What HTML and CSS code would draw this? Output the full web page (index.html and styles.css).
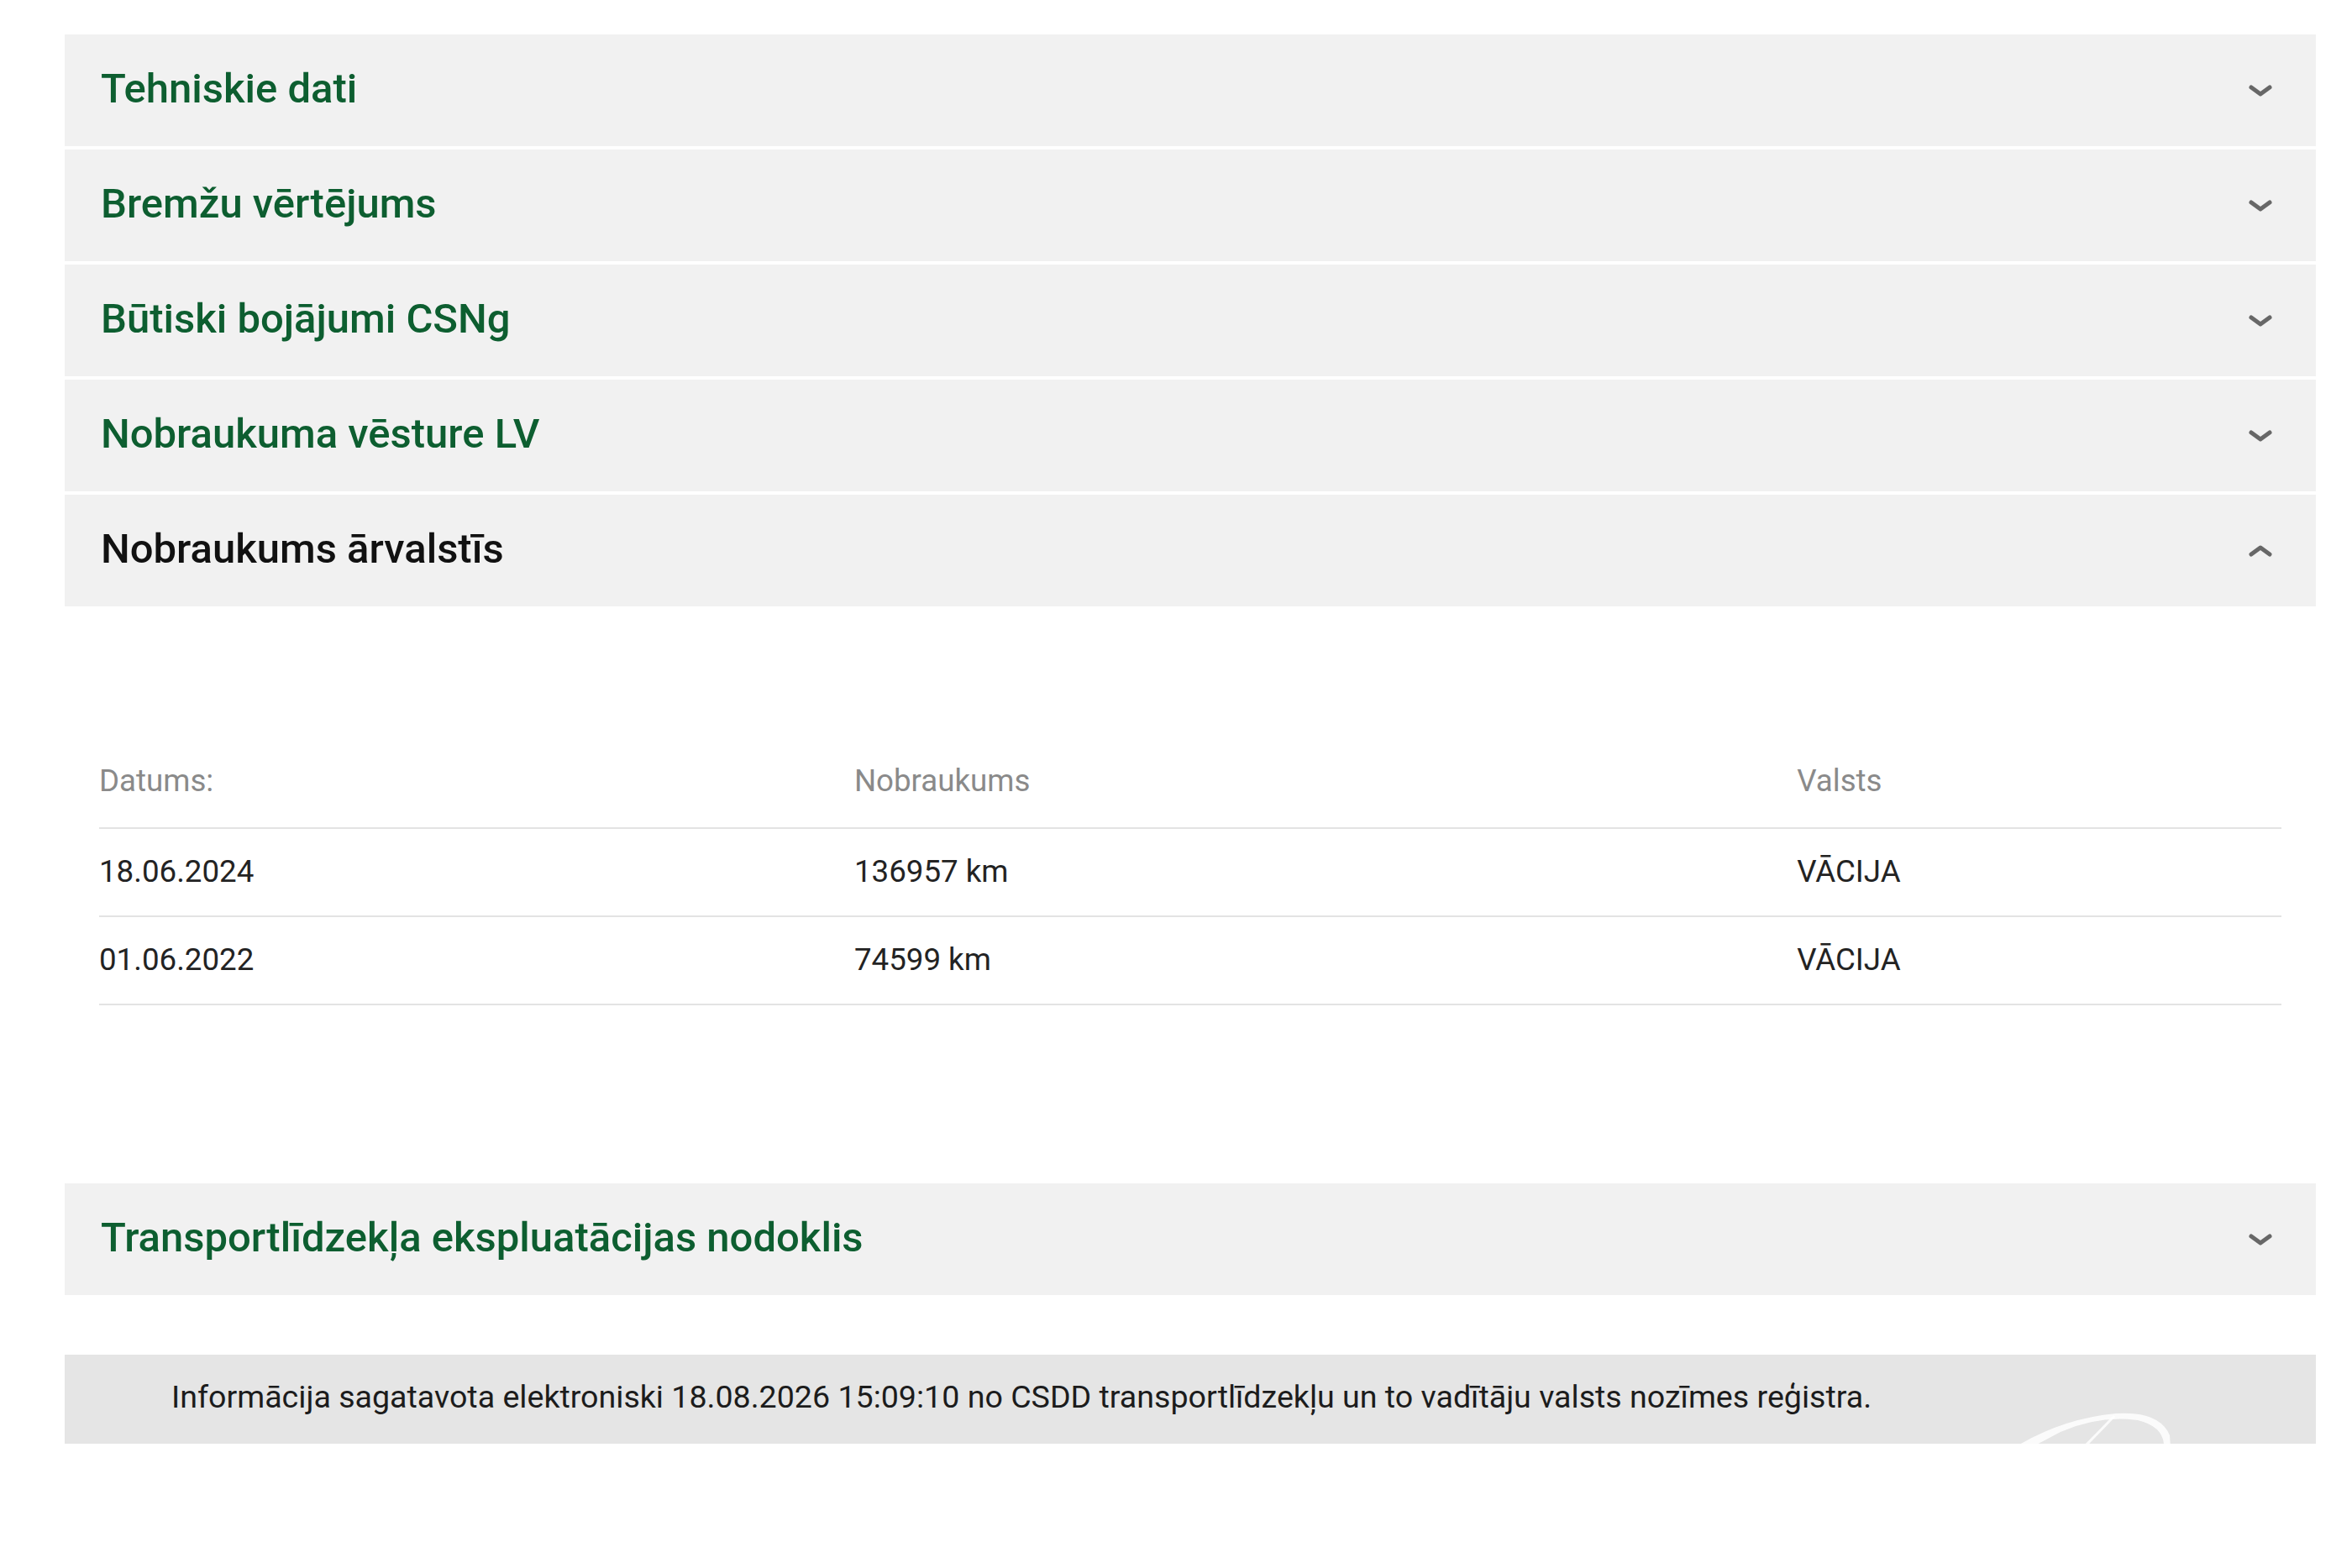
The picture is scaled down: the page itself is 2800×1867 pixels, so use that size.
FILE: index.html
```html
<!DOCTYPE html>
<html lang="lv">
  <head>
    <meta charset="UTF-8" />
    <meta name="viewport" content="width=device-width, initial-scale=1.0" />
    <title>Transportlīdzekļa dati</title>
    <link rel="stylesheet" href="styles.css">
  </head>
  <body>

    <main class="vehicle-info">

      <section class="panel">
        <div class="panel-head">
          <h3 class="panel-title">Tehniskie dati</h3>
          <svg class="chevron" viewBox="0 0 28 14"><polyline points="3,3 14,11 25,3" /></svg>
        </div>
      </section>

      <section class="panel">
        <div class="panel-head">
          <h3 class="panel-title">Bremžu vērtējums</h3>
          <svg class="chevron" viewBox="0 0 28 14"><polyline points="3,3 14,11 25,3" /></svg>
        </div>
      </section>

      <section class="panel">
        <div class="panel-head">
          <h3 class="panel-title">Būtiski bojājumi CSNg</h3>
          <svg class="chevron" viewBox="0 0 28 14"><polyline points="3,3 14,11 25,3" /></svg>
        </div>
      </section>

      <section class="panel">
        <div class="panel-head">
          <h3 class="panel-title">Nobraukuma vēsture LV</h3>
          <svg class="chevron" viewBox="0 0 28 14"><polyline points="3,3 14,11 25,3" /></svg>
        </div>
      </section>

      <!-- open panel -->
      <section class="panel panel-open">
        <div class="panel-head">
          <h3 class="panel-title">Nobraukums ārvalstīs</h3>
          <svg class="chevron" viewBox="0 0 28 14"><polyline points="3,11 14,3 25,11" /></svg>
        </div>
        <div class="panel-body">
          <table class="mileage">
            <thead>
              <tr>
                <th class="col-date">Datums:</th>
                <th class="col-km">Nobraukums</th>
                <th>Valsts</th>
              </tr>
            </thead>
            <tbody>
              <tr>
                <td>18.06.2024</td>
                <td>136957 km</td>
                <td>VĀCIJA</td>
              </tr>
              <tr>
                <td>01.06.2022</td>
                <td>74599 km</td>
                <td>VĀCIJA</td>
              </tr>
            </tbody>
          </table>
        </div>
      </section>

      <section class="panel">
        <div class="panel-head">
          <h3 class="panel-title">Transportlīdzekļa ekspluatācijas nodoklis</h3>
          <svg class="chevron" viewBox="0 0 28 14"><polyline points="3,3 14,11 25,3" /></svg>
        </div>
      </section>

      <div class="info-bar">
        <p>Informācija sagatavota elektroniski 18.08.2026 15:09:10 no CSDD transportlīdzekļu un to vadītāju valsts nozīmes reģistra.</p>
        <!-- logo swoosh, cut off by the bar -->
        <svg class="info-mark" viewBox="0 0 200 60">
          <path d="M4,46 Q60,12 124,6 Q176,3 188,32 L189,46 L181,46 Q182,22 150,14 Q104,8 58,28 L24,46 Z" />
          <path class="info-mark-line" d="M122,9 Q104,28 86,46" />
        </svg>
      </div>

    </main>

  </body>
</html>
```

FILE: styles.css
```css
*{
    padding: 0px;
    margin: 0px;
    box-sizing: border-box;
}
body{
    background-color: #fff;
    font-family: Roboto, "Liberation Sans", Arial, sans-serif;
    color: #222;
}

.vehicle-info{
    margin: 0 43px 0 77px;
    padding-top: 41px;
    padding-bottom: 140px;
}

.panel{
    margin-bottom: 4px;
}
.panel-head{
    height: 133px;
    background-color: #f1f1f1;
    display: flex;
    align-items: center;
    justify-content: space-between;
    padding: 0 52px 5px 43px;
}
.panel-title{
    font-size: 49px;
    font-weight: 500;
    color: #0d5e30;
}
.panel-open .panel-title{
    color: #111;
}
.chevron{
    width: 28px;
    height: 14px;
    margin-top: 5px;
}
.chevron polyline{
    fill: none;
    stroke: #676767;
    stroke-width: 5;
    stroke-linecap: round;
    stroke-linejoin: round;
}

/* table inside the open panel */
.panel-body{
    padding: 157px 41px 208px 41px;
}
.mileage{
    width: 100%;
    border-collapse: collapse;
    font-size: 36.7px;
}
.mileage th,
.mileage td{
    text-align: left;
    line-height: 54px;
    border-bottom: 2px solid #e3e3e3;
}
.mileage th{
    font-weight: 400;
    color: #8a8a8a;
    padding: 24px 0 28px 0;
}
.mileage td{
    color: #232323;
    padding: 24px 0 25px 0;
}
.col-date{
    width: 34.6%;
}
.col-km{
    width: 43.2%;
}

.info-bar{
    position: relative;
    overflow: hidden;
    margin-top: 71px;
    height: 106px;
    background-color: #e5e5e5;
    display: flex;
    align-items: center;
    padding: 0 0 6px 127px;
}
.info-bar p{
    font-size: 37.6px;
    color: #1c1c1c;
}
.info-mark{
    position: absolute;
    left: 2318px;
    top: 64px;
    width: 200px;
    height: 60px;
}
.info-mark path{
    fill: rgba(255, 255, 255, 0.85);
}
.info-mark .info-mark-line{
    fill: none;
    stroke: rgba(255, 255, 255, 0.85);
    stroke-width: 3;
}
```
